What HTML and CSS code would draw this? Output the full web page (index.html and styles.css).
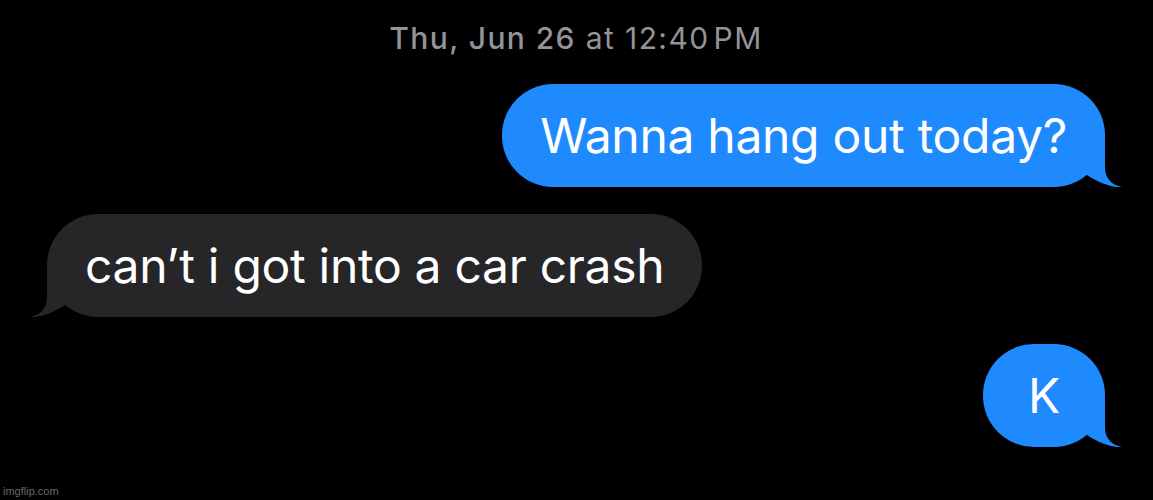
FILE: index.html
```html
<!DOCTYPE html>
<html lang="en">
  <head>
    <meta charset="UTF-8" />
    <title>Messages</title>
    <link rel="stylesheet" href="styles.css" />
  </head>
  <body>
    <div class="thread">
      <div class="stamp"><b>Thu, Jun 26</b> at 12:40&#8202;PM</div>

      <div class="row sent">
        <div class="bubble">
          Wanna hang out today?
          <svg class="tail" viewBox="-20 -52 40 52" width="40" height="52">
            <path d="M-20 -52 H0 V-20 C0 -8 7 -2 17 0 C8 1 -6 -4 -18 -12 L-20 -12 Z" />
          </svg>
        </div>
      </div>

      <div class="row received">
        <div class="bubble">
          can’t i got into a car crash
          <svg class="tail" viewBox="-20 -52 40 52" width="40" height="52">
            <path d="M-20 -52 H0 V-20 C0 -8 7 -2 17 0 C8 1 -6 -4 -18 -12 L-20 -12 Z" />
          </svg>
        </div>
      </div>

      <div class="row sent">
        <div class="bubble short">
          K
          <svg class="tail" viewBox="-20 -52 40 52" width="40" height="52">
            <path d="M-20 -52 H0 V-20 C0 -8 7 -2 17 0 C8 1 -6 -4 -18 -12 L-20 -12 Z" />
          </svg>
        </div>
      </div>
    </div>

    <div class="watermark">imgflip.com</div>
  </body>
</html>
```

FILE: styles.css
```css
html {
  background: #000;
}

body {
  margin: 0;
  height: 500px;
  background: #000;
  font-family: Inter, "Noto Sans", sans-serif;
  color: #fff;
  position: relative;
  overflow: hidden;
}

.thread {
  display: flex;
  flex-direction: column;
  gap: 27px;
  padding: 21px 48px 0 47px;
}

.stamp {
  text-align: center;
  font-size: 30px;
  letter-spacing: 1.4px;
  color: #939398;
  line-height: 34px;
  margin-bottom: 2px;
}

.stamp b {
  font-weight: 500;
}

.row {
  display: flex;
}

.row.sent {
  justify-content: flex-end;
}

.row.received {
  justify-content: flex-start;
}

.bubble {
  position: relative;
  height: 103px;
  box-sizing: border-box;
  padding: 0 38px;
  display: flex;
  align-items: center;
  justify-content: center;
  border-radius: 51px;
  font-size: 48px;
  line-height: 1;
  letter-spacing: -0.3px;
  white-space: nowrap;
}

.bubble.short {
  min-width: 122px;
  padding: 0;
}

.sent .bubble {
  background: #1f8afe;
}

.received .bubble {
  background: #262628;
}

.tail {
  position: absolute;
  bottom: 0;
}

.sent .tail {
  right: -20px;
  fill: #1f8afe;
}

.received .tail {
  left: -20px;
  fill: #262628;
  transform: scaleX(-1);
}

.watermark {
  position: absolute;
  left: 3px;
  bottom: 3px;
  font-family: "Liberation Sans", Arial, sans-serif;
  font-size: 11px;
  color: #6a6a6a;
}
```
